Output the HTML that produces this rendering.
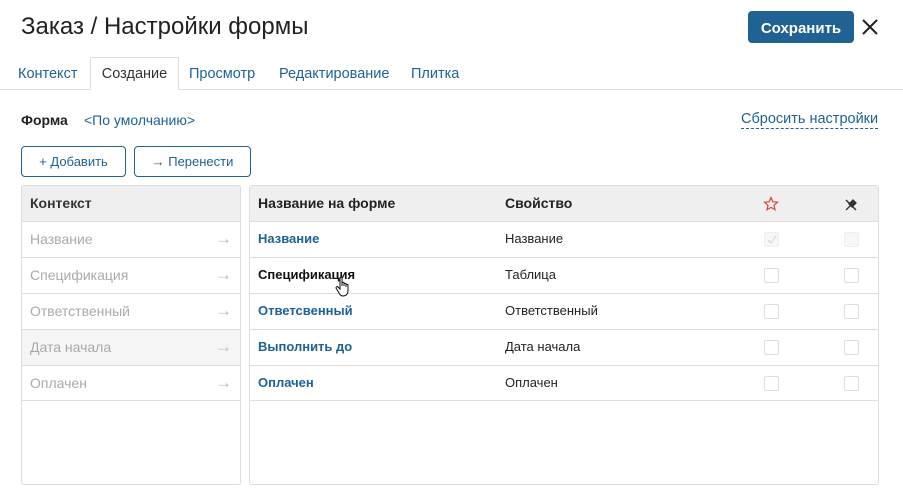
<!DOCTYPE html>
<html><head><meta charset="utf-8"><style>
*{box-sizing:border-box;margin:0;padding:0}
body{width:903px;height:496px;background:#fff;font-family:"Liberation Sans",sans-serif;position:relative;overflow:hidden;color:#222}
.a{position:absolute}
.title{left:21px;top:13px;font-size:24px;color:#222}
.save{left:748px;top:11px;width:106px;height:32px;background:#1f6293;border-radius:4px;color:#fff;font-size:15px;font-weight:bold;text-align:center;line-height:32px;padding-top:2px}
.tabs{left:0;top:89px;width:903px;border-top:1px solid #ddd}
.tab{top:66px;font-size:14.5px;color:#1f6293}
.act{left:90px;top:57px;width:89px;height:33px;border:1px solid #ddd;border-bottom:1px solid #fff;background:#fff;color:#333;font-size:14.5px;text-align:center;line-height:33px}
.btn{top:146px;height:31px;border:1px solid #1f6293;border-radius:4px;font-size:13px;color:#1f6293;text-align:center;line-height:29px}
.panel{border:1px solid #ddd;border-radius:3px;top:185px;height:300px;overflow:hidden}
.hd{height:35px;background:#efefef;font-size:14px;font-weight:bold;line-height:35px;position:relative}
.row{height:36px;border-top:1px solid #ddd;font-size:14px;line-height:34px;position:relative}
.lrow{color:#aaa;padding-left:8px}
.arr{position:absolute;right:8px;top:0;color:#bbb;font-size:17px}
.cb{position:absolute;top:10px;width:15px;height:15px;border:1px solid #ddd;border-radius:2px;background:#fff}
</style></head><body>
<div class="a title">Заказ / Настройки формы</div>
<div class="a save">Сохранить</div>
<svg class="a" style="left:861px;top:18px" width="18" height="18"><path d="M2 2L16 16M16 2L2 16" stroke="#222" stroke-width="2"/></svg>
<div class="a tabs"></div>
<div class="a tab" style="left:18px">Контекст</div>
<div class="a act">Создание</div>
<div class="a tab" style="left:189px">Просмотр</div>
<div class="a tab" style="left:279px">Редактирование</div>
<div class="a tab" style="left:411px">Плитка</div>
<div class="a" style="left:21px;top:112px;font-size:14px;font-weight:bold">Форма</div>
<div class="a" style="left:84px;top:112px;font-size:14px;color:#1f6293">&lt;По умолчанию&gt;</div>
<div class="a" style="left:741px;top:111px;font-size:14.5px;color:#1f6293;border-bottom:1px dashed #1f6293;line-height:17px">Сбросить настройки</div>
<div class="a btn" style="left:21px;width:105px">+ Добавить</div>
<div class="a btn" style="left:134px;width:117px">→ Перенести</div>
<div class="a panel" style="left:21px;width:220px">
<div class="hd" style="padding-left:8px;color:#333">Контекст</div>
<div class="row lrow">Название<span class="arr">→</span></div>
<div class="row lrow">Спецификация<span class="arr">→</span></div>
<div class="row lrow">Ответственный<span class="arr">→</span></div>
<div class="row lrow" style="background:#f5f5f5">Дата начала<span class="arr">→</span></div>
<div class="row lrow" style="border-bottom:1px solid #ddd">Оплачен<span class="arr">→</span></div>
</div>
<div class="a panel" style="left:249px;width:630px">
<div class="hd"><span class="a" style="left:8px">Название на форме</span><span class="a" style="left:255px">Свойство</span>
<svg class="a" style="left:513px;top:10px" width="16" height="16" viewBox="0 0 16 16"><path d="M8 1.5L9.9 5.8 14.5 6.2 11 9.3 12 13.8 8 11.4 4 13.8 5 9.3 1.5 6.2 6.1 5.8Z" fill="none" stroke="#d9453d" stroke-width="1.2"/></svg>
<svg class="a" style="left:594px;top:12px" width="14" height="14" viewBox="0 0 14 14"><path d="M2 2L12 12" stroke="#333" stroke-width="1.5"/><path d="M7 7L3 11 2 12M9 2L12 5 8 9 5 6Z" stroke="#333" fill="#333" stroke-width="1.3"/></svg>
</div>
<div class="row"><span class="a" style="left:8px;color:#1f6293;font-weight:bold;font-size:13px">Название</span><span class="a" style="left:255px;font-size:13px">Название</span><div class="cb" style="left:514px;background:#f7f7f7;border-color:#eee"><svg width="13" height="13" style="position:absolute;left:0;top:0"><path d="M3 7L6 10 11 3" stroke="#c8d4e0" fill="none"/></svg></div><div class="cb" style="left:594px;background:#f7f7f7;border-color:#eee"></div></div>
<div class="row"><span class="a" style="left:8px;font-weight:bold;font-size:13px;color:#111">Спецификация</span><span class="a" style="left:255px;font-size:13px">Таблица</span><div class="cb" style="left:514px"></div><div class="cb" style="left:594px"></div></div>
<div class="row"><span class="a" style="left:8px;color:#1f6293;font-weight:bold;font-size:13px">Ответсвенный</span><span class="a" style="left:255px;font-size:13px">Ответственный</span><div class="cb" style="left:514px"></div><div class="cb" style="left:594px"></div></div>
<div class="row"><span class="a" style="left:8px;color:#1f6293;font-weight:bold;font-size:13px">Выполнить до</span><span class="a" style="left:255px;font-size:13px">Дата начала</span><div class="cb" style="left:514px"></div><div class="cb" style="left:594px"></div></div>
<div class="row" style="border-bottom:1px solid #ddd"><span class="a" style="left:8px;color:#1f6293;font-weight:bold;font-size:13px">Оплачен</span><span class="a" style="left:255px;font-size:13px">Оплачен</span><div class="cb" style="left:514px"></div><div class="cb" style="left:594px"></div></div>
</div>
<svg class="a" style="left:335px;top:276px" width="18" height="22" viewBox="0 0 18 22"><path d="M5 2C5 1 7 1 7 2V10V7C7 6 9 6 9 7V10 8C9 7 11 7 11 8V11 9C11 8 13 8 13 9V15C13 18 11 20 8 20 6 20 5 19 4 17L1 12C1 11 2 10 3 11L5 13Z" fill="#fff" stroke="#111" stroke-width="1"/></svg>
</body></html>
